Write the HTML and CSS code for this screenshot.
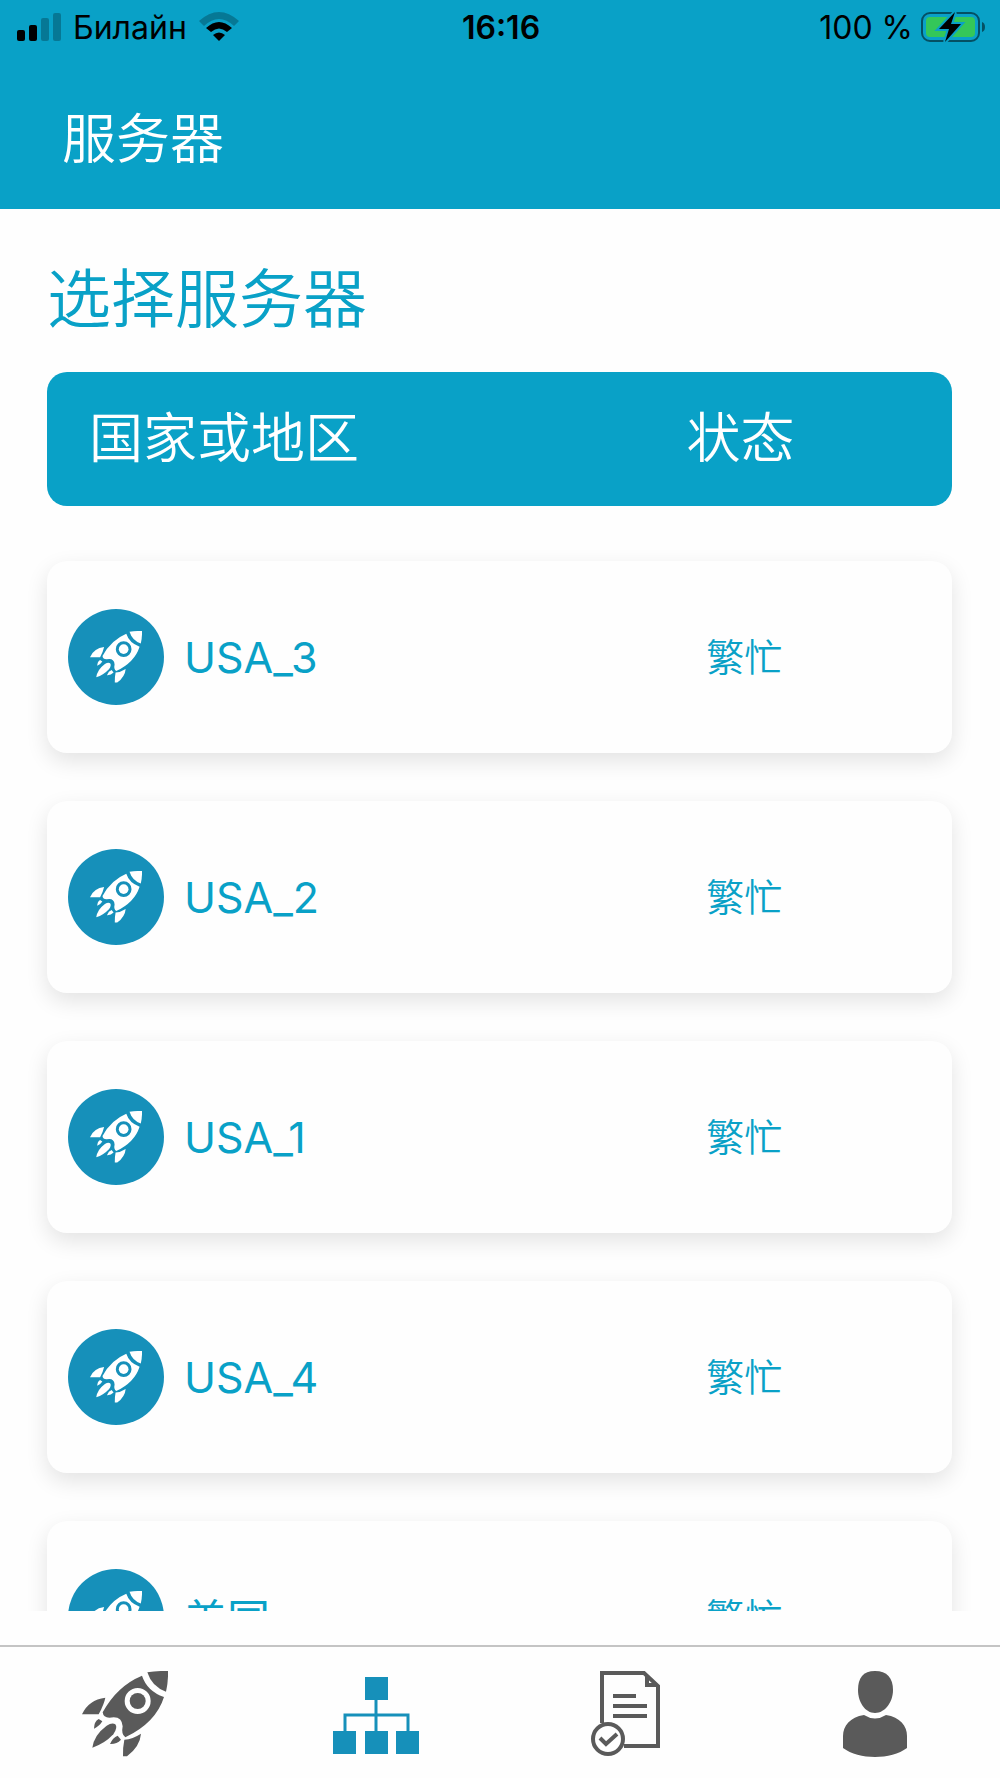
FILE: index.html
```html
<!DOCTYPE html>
<html lang="zh-CN">
<head>
<meta charset="utf-8">
<meta name="viewport" content="width=device-width,initial-scale=1.0">
<title>服务器</title>
<link rel="stylesheet" href="styles.css">
</head>
<body>

<!-- shared icons -->
<svg class="sprite" aria-hidden="true">
  <symbol id="rocket" viewBox="0 0 258 258">
    <path d="M196 4Q225 -1 258 0Q259 33 252 62Q210 48 196 4Z"/>
    <path fill-rule="evenodd" d="M180 14Q195 60 246 78Q222 155 130 199Q117 190 122 166Q120 132 82 140Q64 140 62 124Q105 45 180 14ZM167 51A39 39 0 1 0 167 129A39 39 0 1 0 167 51Z"/>
    <circle cx="167" cy="90" r="24"/>
    <path d="M0 130Q20 86 70 80Q66 100 50 130Q26 130 0 130Z"/>
    <path d="M123 256Q122 230 127 206Q152 204 177 188Q174 226 135 256Z"/>
    <path d="M31 230Q36 192 74 164Q90 154 100 160Q108 170 94 190Q68 218 31 230Z"/>
    <path d="M36 173Q36 152 50 144L61 151Q52 166 36 173Z"/>
    <path d="M84 219Q92 200 107 194L117 206Q104 220 84 219Z"/>
  </symbol>
</svg>

<header>
  <div class="statusbar">
    <div class="carrier">
      <svg width="44" height="28" viewBox="0 0 44 28" aria-hidden="true">
        <rect x="0" y="17" width="8" height="11" rx="2"/>
        <rect x="12" y="12" width="8" height="16" rx="2"/>
        <rect class="dim" x="24" y="5" width="8" height="23" rx="2"/>
        <rect class="dim" x="36" y="0" width="8" height="28" rx="2"/>
      </svg>
      <span>Билайн</span>
      <svg width="40" height="30" viewBox="0 0 40 30" aria-hidden="true">
        <path class="dim" d="M0 9Q20 -9 40 9L35 14Q20 0 5 14Z"/>
        <path d="M7 16Q20 4 33 16L28 20Q20 13 12 20Z"/>
        <path d="M14 23Q20 18 26 23L20 29Z"/>
      </svg>
    </div>
    <time class="clock">16:16</time>
    <div class="power">
      <span>100 %</span>
      <svg width="64" height="32" viewBox="0 0 64 32" aria-hidden="true">
        <rect class="case" x="1" y="2" width="57" height="28" rx="8"/>
        <path class="case-tip" d="M61 11Q64 12 64 16Q64 20 61 21Z"/>
        <rect class="charge" x="5" y="6" width="49" height="20" rx="4"/>
        <path class="bolt" d="M34 1L18 18H28L24 31L40 13H30Z"/>
      </svg>
    </div>
  </div>
  <h1>服务器</h1>
</header>

<main>
  <h2>选择服务器</h2>
  <table class="servers">
    <thead>
      <tr><th class="name">国家或地区</th><th class="state">状态</th></tr>
    </thead>
    <tbody>
      <tr>
        <td class="name"><span class="badge"><svg><use href="#rocket"/></svg></span>USA_3</td>
        <td class="state">繁忙</td>
      </tr>
      <tr>
        <td class="name"><span class="badge"><svg><use href="#rocket"/></svg></span>USA_2</td>
        <td class="state">繁忙</td>
      </tr>
      <tr>
        <td class="name"><span class="badge"><svg><use href="#rocket"/></svg></span>USA_1</td>
        <td class="state">繁忙</td>
      </tr>
      <tr>
        <td class="name"><span class="badge"><svg><use href="#rocket"/></svg></span>USA_4</td>
        <td class="state">繁忙</td>
      </tr>
      <tr>
        <td class="name"><span class="badge"><svg><use href="#rocket"/></svg></span>美国</td>
        <td class="state">繁忙</td>
      </tr>
    </tbody>
  </table>
</main>

<nav>
  <a href="#connect" aria-label="连接">
    <svg><use href="#rocket"/></svg>
  </a>
  <a href="#servers" class="active" aria-label="服务器">
    <svg viewBox="0 0 86 86">
      <path d="M33 6h23v23H33zM1 60h23v23H1zM33 60h23v23H33zM64 60h23v23H64z"/>
      <path class="line" d="M44 29V60M13 60V44H76V60"/>
    </svg>
  </a>
  <a href="#terms" aria-label="条款">
    <svg viewBox="0 0 86 86">
      <path class="outline" d="M20 52V2H62L76 15V75H42M65 4V14H74"/>
      <path class="outline" d="M31 25H54M31 35H65M31 45H65"/>
      <circle class="outline" cx="26" cy="68" r="15"/>
      <path class="outline" d="M18 67L24 73L35 63"/>
    </svg>
  </a>
  <a href="#account" aria-label="账户">
    <svg viewBox="0 0 86 86">
      <path d="M43 0C55 0 61 7 61 19C61 31 53 42 43 42C33 42 26 31 26 19C26 7 31 0 43 0Z"/>
      <path d="M32 44Q43 51 54 44C68 46 75 55 75 65V77C67 83 55 86 43 86C31 86 19 83 11 77V65C11 55 18 46 32 44Z"/>
    </svg>
  </a>
</nav>

</body>
</html>
```

FILE: styles.css
```css
*{
  box-sizing:border-box;
}

body{
  display:flex;
  flex-direction:column;
  height:100vh;
  margin:0;
  font-family:Inter,"Noto Sans CJK SC",sans-serif;
  color:#09a1c7;
  background:#fefefe;
}

svg{
  display:block;
  overflow:visible;
  fill:currentColor;
}

.sprite{
  position:absolute;
  width:0;
  height:0;
}

h1,
h2,
th{
  margin:0;
  font-weight:350;
}

/* header */

header{
  flex:none;
  color:#ffffff;
  background:#09a1c7;
}

.statusbar{
  display:flex;
  align-items:center;
  height:54px;
  padding:0 15px 0 17px;
  font-size:32px;
  color:#000000;
}

.carrier,
.power{
  display:flex;
  flex:1;
  align-items:center;
  gap:12px;
}

.power{
  justify-content:flex-end;
  gap:8px;
}

.clock{
  font-weight:600;
}

.dim{
  opacity:0.25;
}

.case{
  fill:none;
  stroke:#000000;
  stroke-width:2;
  opacity:0.5;
}

.case-tip{
  opacity:0.5;
}

.charge{
  fill:#34c759;
}

.bolt{
  stroke:#09a1c7;
  stroke-width:4;
  paint-order:stroke;
}

h1{
  padding:46px 62px 29px;
  font-size:54px;
  line-height:80px;
}

/* server list */

main{
  flex:1;
  min-height:0;
  margin-bottom:34px;
  padding:0 48px 0 47px;
  overflow:hidden;
}

h2{
  padding:52px 0 35px;
  font-size:64px;
  line-height:76px;
}

.servers,
thead,
tbody{
  display:block;
}

tr{
  display:flex;
  align-items:center;
  border-radius:20px;
}

th,
td{
  padding:0;
}

.name{
  display:flex;
  flex:1;
  align-items:center;
  gap:20px;
}

.state{
  width:47%;
  padding-bottom:5px;
  text-align:center;
}

thead tr{
  height:134px;
  margin-bottom:55px;
  padding:0 0 10px 42px;
  font-size:54px;
  color:#ffffff;
  background:#09a1c7;
}

thead .state{
  width:49%;
  padding-bottom:0;
}

tbody tr{
  height:192px;
  margin-bottom:48px;
  padding-left:21px;
  font-size:43px;
  background:#fefefe;
  box-shadow:0 8px 22px rgba(0,0,0,0.11);
}

tbody .state{
  font-size:38px;
  font-weight:350;
}

.badge{
  display:flex;
  align-items:center;
  justify-content:center;
  width:96px;
  height:96px;
  border-radius:50%;
  color:#ffffff;
  background:#1690ba;
}

.badge svg{
  width:52px;
  height:52px;
}

/* bottom tabs */

nav{
  display:flex;
  flex:none;
  padding:24px 0 21px;
  border-top:2px solid #c4c4c4;
}

nav a{
  display:flex;
  flex:1;
  justify-content:center;
  color:#5a5a5a;
}

nav a.active{
  color:#1690ba;
}

nav svg{
  width:86px;
  height:86px;
}

.line,
.outline{
  fill:none;
  stroke:currentColor;
  stroke-width:3;
}

.outline{
  stroke-width:4;
}
```
